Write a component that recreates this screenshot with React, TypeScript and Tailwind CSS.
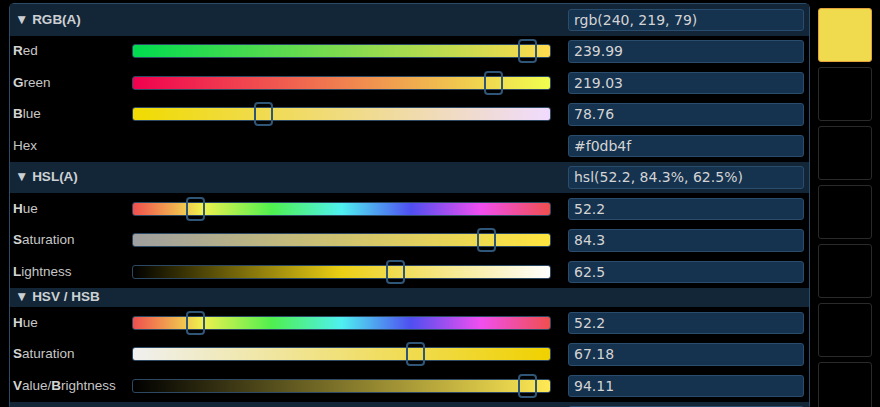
import React from 'react';

type Row = {
  label: [string, boolean][];
  value: string;
  frac?: number;
  track?: string;
};

type Section = {
  title: string;
  value?: string;
  short?: boolean;
  rows: Row[];
};

const HUE =
  'bg-[linear-gradient(to_right,hsl(0,84.3%,62.5%),hsl(60,84.3%,62.5%),hsl(120,84.3%,62.5%),hsl(180,84.3%,62.5%),hsl(240,84.3%,62.5%),hsl(300,84.3%,62.5%),hsl(360,84.3%,62.5%))]';

const sections: Section[] = [
  {
    title: 'RGB(A)',
    value: 'rgb(240, 219, 79)',
    rows: [
      { label: [['R', true], ['ed', false]], value: '239.99', frac: 239.99 / 255, track: 'bg-[linear-gradient(to_right,rgb(0,219,79),rgb(255,219,79))]' },
      { label: [['G', true], ['reen', false]], value: '219.03', frac: 219.03 / 255, track: 'bg-[linear-gradient(to_right,rgb(240,0,79),rgb(240,255,79))]' },
      { label: [['B', true], ['lue', false]], value: '78.76', frac: 78.76 / 255, track: 'bg-[linear-gradient(to_right,rgb(240,219,0),rgb(240,219,255))]' },
      { label: [['Hex', false]], value: '#f0db4f' },
    ],
  },
  {
    title: 'HSL(A)',
    value: 'hsl(52.2, 84.3%, 62.5%)',
    rows: [
      { label: [['H', true], ['ue', false]], value: '52.2', frac: 52.2 / 360, track: HUE },
      { label: [['S', true], ['aturation', false]], value: '84.3', frac: 0.843, track: 'bg-[linear-gradient(to_right,hsl(52.2,0%,62.5%),hsl(52.2,100%,62.5%))]' },
      { label: [['L', true], ['ightness', false]], value: '62.5', frac: 0.625, track: 'bg-[linear-gradient(to_right,hsl(52.2,84.3%,0%),hsl(52.2,84.3%,50%),hsl(52.2,84.3%,100%))]' },
    ],
  },
  {
    title: 'HSV / HSB',
    short: true,
    rows: [
      { label: [['H', true], ['ue', false]], value: '52.2', frac: 52.2 / 360, track: HUE },
      { label: [['S', true], ['aturation', false]], value: '67.18', frac: 0.6718, track: 'bg-[linear-gradient(to_right,rgb(240,240,240),rgb(240,209,0))]' },
      { label: [['V', true], ['alue/', false], ['B', true], ['rightness', false]], value: '94.11', frac: 0.9411, track: 'bg-[linear-gradient(to_right,rgb(0,0,0),rgb(255,233,84))]' },
    ],
  },
];

function Field({ value }: { value: string }) {
  return (
    <input
      readOnly
      value={value}
      className="block h-[22.5px] w-[236px] shrink-0 rounded-[3px] border border-[#2a4d6e] bg-[#15324f] pl-[5px] font-['DejaVu_Sans',sans-serif] text-[14px] text-[#d4d4d4] outline-none"
    />
  );
}

function Slider({ frac, track }: { frac: number; track: string }) {
  // thumb centre sits 3px in from the track edge, over a 417px span
  const left = 3 + frac * 417 - 1 - 9.5;
  return (
    <div className={`relative h-[14px] w-[419px] shrink-0 rounded-[3px] border border-[#2d4863] ${track}`}>
      <div
        className="absolute top-[-6px] h-[24px] w-[19px] rounded-[4px] border-2 border-[#2f5577]"
        style={{ left: `${left}px` }}
      />
    </div>
  );
}

function Header({ s }: { s: Section }) {
  return (
    <div
      className={`flex items-center bg-[#132638] pl-[5px] pr-[5px] ${s.short ? 'h-[19.5px]' : 'h-[31.5px]'}`}
    >
      <span className="text-[13.5px] font-bold text-[#cdd0d3]">▼ {s.title}</span>
      {s.value !== undefined && (
        <div className="ml-auto">
          <Field value={s.value} />
        </div>
      )}
    </div>
  );
}

export default function App() {
  return (
    <div className="flex h-[407px] overflow-hidden bg-black pl-[9px] pt-[3px] font-['Liberation_Sans',Arial,sans-serif]">
      <div className="w-[801px] shrink-0 rounded-t-[5px] border border-[#2c4b69] bg-black">
        {sections.map((s) => (
          <div key={s.title}>
            <Header s={s} />
            {s.rows.map((r, i) => (
              <div key={i} className="flex h-[31.5px] items-center pr-[5px]">
                <div className="w-[122px] shrink-0 pl-[3px] text-[13.5px] text-[#c6c6c6]">
                  {r.label.map(([t, b], j) => (
                    <span key={j} className={b ? 'font-bold text-[#d4d4d4]' : ''}>
                      {t}
                    </span>
                  ))}
                </div>
                {r.track !== undefined && r.frac !== undefined ? (
                  <Slider frac={r.frac} track={r.track} />
                ) : (
                  <div className="w-[419px] shrink-0" />
                )}
                <div className="ml-[17px]">
                  <Field value={r.value} />
                </div>
              </div>
            ))}
          </div>
        ))}
        <div className="flex h-[31.5px] items-center bg-[#132638] pr-[5px]">
          <div className="ml-auto h-[22.5px] w-[236px] rounded-[3px] border border-[#2a4d6e] bg-[#15324f]" />
        </div>
      </div>
      <div className="ml-[8px] flex w-[54px] shrink-0 flex-col gap-[5px] pt-[5px]">
        <div className="h-[54px] shrink-0 rounded-[3px] border border-[#e3a23a] bg-[#f0db4f]" />
        {[0, 1, 2, 3, 4, 5].map((k) => (
          <div key={k} className="h-[54px] shrink-0 rounded-[3px] border border-[#2a2a2a] bg-black" />
        ))}
      </div>
    </div>
  );
}
